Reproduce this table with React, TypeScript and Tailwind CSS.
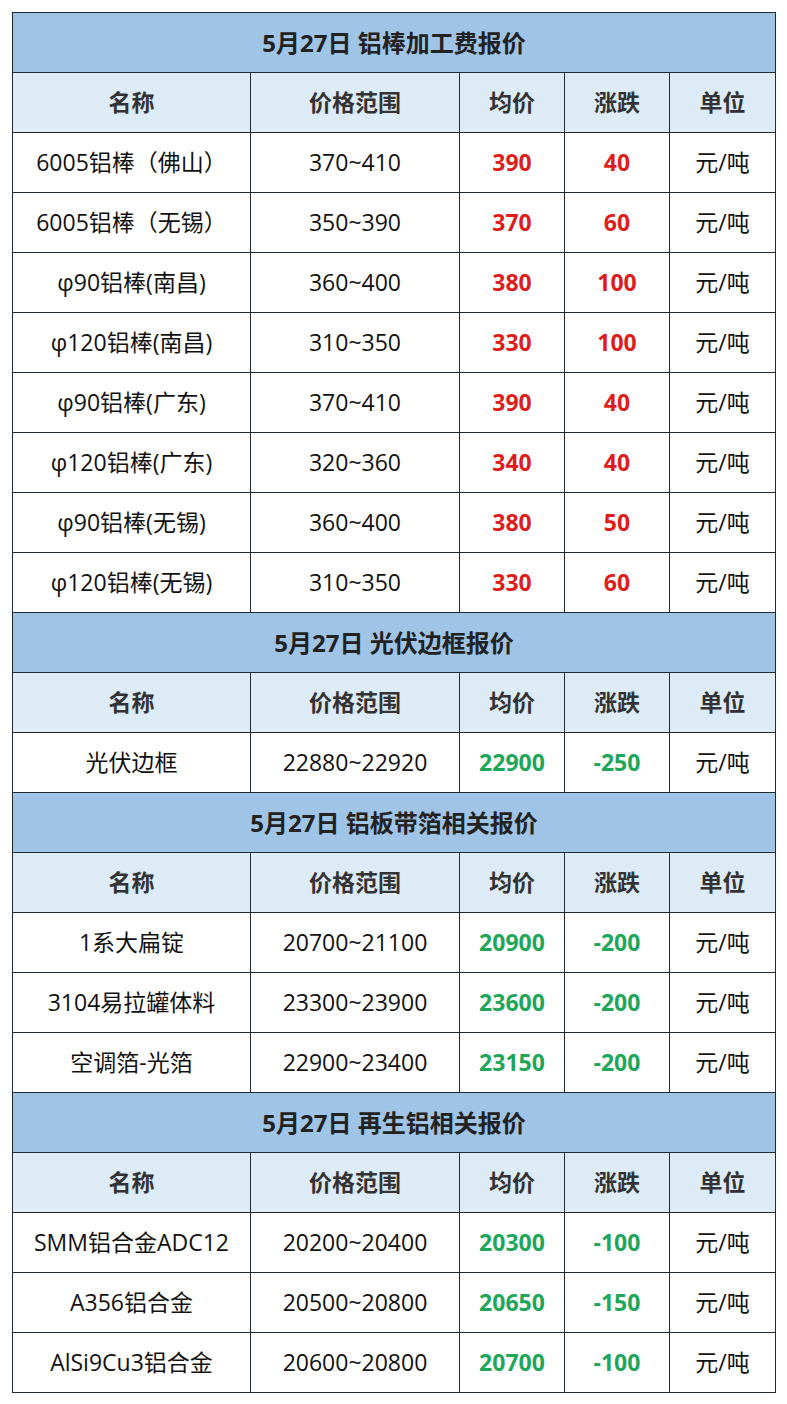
import React from "react";

type Row = [string, string, string, string];

const sections: { title: string; color: "red" | "green"; rows: Row[] }[] = [
  {
    title: "5月27日 铝棒加工费报价",
    color: "red",
    rows: [
      ["6005铝棒（佛山）", "370~410", "390", "40"],
      ["6005铝棒（无锡）", "350~390", "370", "60"],
      ["φ90铝棒(南昌)", "360~400", "380", "100"],
      ["φ120铝棒(南昌)", "310~350", "330", "100"],
      ["φ90铝棒(广东)", "370~410", "390", "40"],
      ["φ120铝棒(广东)", "320~360", "340", "40"],
      ["φ90铝棒(无锡)", "360~400", "380", "50"],
      ["φ120铝棒(无锡)", "310~350", "330", "60"],
    ],
  },
  {
    title: "5月27日 光伏边框报价",
    color: "green",
    rows: [["光伏边框", "22880~22920", "22900", "-250"]],
  },
  {
    title: "5月27日 铝板带箔相关报价",
    color: "green",
    rows: [
      ["1系大扁锭", "20700~21100", "20900", "-200"],
      ["3104易拉罐体料", "23300~23900", "23600", "-200"],
      ["空调箔-光箔", "22900~23400", "23150", "-200"],
    ],
  },
  {
    title: "5月27日 再生铝相关报价",
    color: "green",
    rows: [
      ["SMM铝合金ADC12", "20200~20400", "20300", "-100"],
      ["A356铝合金", "20500~20800", "20650", "-150"],
      ["AlSi9Cu3铝合金", "20600~20800", "20700", "-100"],
    ],
  },
];

const headers = ["名称", "价格范围", "均价", "涨跌", "单位"];

export default function App() {
  return (
    <div
      className="w-[787px] h-[1404px] bg-white pt-[12px] pl-[12px]"
      style={{ fontFamily: '"Open Sans", "Noto Sans CJK SC", sans-serif' }}
    >
      <table className="border-collapse table-fixed w-[763px] text-[23px] text-[#111]">
        <colgroup>
          <col className="w-[238px]" />
          <col className="w-[209px]" />
          <col className="w-[105px]" />
          <col className="w-[105px]" />
          <col className="w-[106px]" />
        </colgroup>
        <tbody>
          {sections.map((s, si) => (
            <React.Fragment key={si}>
              <tr className="h-[60px]">
                <td
                  colSpan={5}
                  className="border border-[#1f2a33] bg-[#9fc4e6] text-center font-bold text-[24px] text-[#222] p-0 leading-none"
                >
                  {s.title}
                </td>
              </tr>
              <tr className="h-[60px]">
                {headers.map((h) => (
                  <td
                    key={h}
                    className="border border-[#1f2a33] bg-[#ddebf7] text-center font-bold text-[#333] p-0 leading-none"
                  >
                    {h}
                  </td>
                ))}
              </tr>
              {s.rows.map((r, ri) => (
                <tr key={ri} className="h-[60px]">
                  <td className="border border-[#1f2a33] text-center p-0 leading-none">{r[0]}</td>
                  <td className="border border-[#1f2a33] text-center p-0 leading-none">{r[1]}</td>
                  <td
                    className={
                      s.color === "red"
                        ? "border border-[#1f2a33] text-center p-0 leading-none font-bold text-[#dd1c1c]"
                        : "border border-[#1f2a33] text-center p-0 leading-none font-bold text-[#1ea65a]"
                    }
                  >
                    {r[2]}
                  </td>
                  <td
                    className={
                      s.color === "red"
                        ? "border border-[#1f2a33] text-center p-0 leading-none font-bold text-[#dd1c1c]"
                        : "border border-[#1f2a33] text-center p-0 leading-none font-bold text-[#1ea65a]"
                    }
                  >
                    {r[3]}
                  </td>
                  <td className="border border-[#1f2a33] text-center p-0 leading-none">元/吨</td>
                </tr>
              ))}
            </React.Fragment>
          ))}
        </tbody>
      </table>
    </div>
  );
}
